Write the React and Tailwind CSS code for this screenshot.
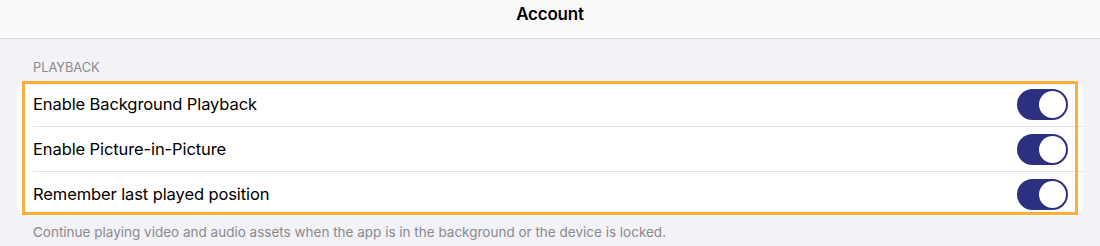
export default function App() {
  const rows = [
    'Enable Background Playback',
    'Enable Picture-in-Picture',
    'Remember last played position',
  ];

  return (
    <div className="w-[1100px] h-[246px] overflow-hidden bg-[#f2f2f7] font-['Inter','Liberation_Sans',sans-serif]">
      <div className="h-[39px] bg-[#f9f9fb] border-b border-[#d9d9dd] flex justify-center pt-[3px]">
        <span className="text-[17px] font-semibold text-black tracking-[-0.2px] leading-[22px]">Account</span>
      </div>

      <div className="px-[17px]">
        <div className="pt-[21px] pb-[6px] pl-[16px] text-[12.8px] text-[#8a8a8e] leading-[16px]">PLAYBACK</div>

        <div className="relative bg-white rounded-[10px]">
          {rows.map((label, i) => (
            <div key={label} className="pl-[16px] flex">
              <div className={`flex-1 flex items-center justify-between pr-[15px] ${i < rows.length - 1 ? 'h-[45px] border-b border-[#e4e4e7]' : 'h-[44px]'}`}>
                <span className="text-[16.5px] text-black tracking-[-0.1px]">{label}</span>
                <Toggle />
              </div>
            </div>
          ))}
          {/* highlight outline over the group */}
          <div className="absolute left-[5px] right-[5px] top-[-1px] bottom-[1px] border-[3px] border-[#fbae3c] pointer-events-none" />
        </div>

        <div className="pt-[7px] pl-[16px] text-[13.5px] text-[#8a8a8e] leading-[18px]">
          Continue playing video and audio assets when the app is in the background or the device is locked.
        </div>
      </div>
    </div>
  );
}

function Toggle() {
  return (
    <div className="w-[51px] h-[31px] rounded-full bg-[#2d2f80] flex items-center justify-end pr-[2px]">
      <div className="w-[27px] h-[27px] rounded-full bg-white" />
    </div>
  );
}
